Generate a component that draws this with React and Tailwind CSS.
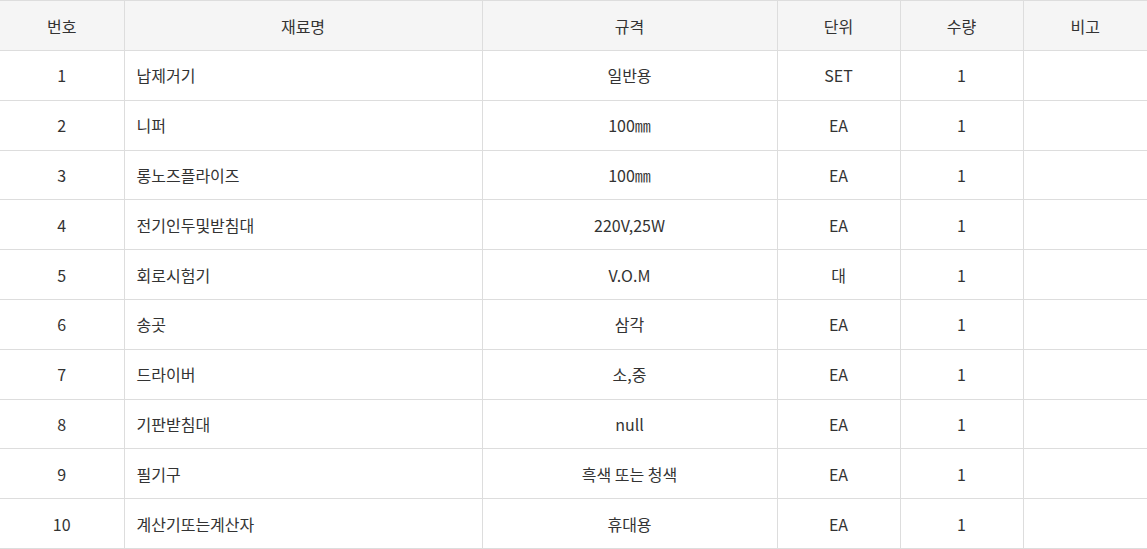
import React from 'react';

const rows = [
  ['1', '납제거기', '일반용', 'SET', '1'],
  ['2', '니퍼', '100㎜', 'EA', '1'],
  ['3', '롱노즈플라이즈', '100㎜', 'EA', '1'],
  ['4', '전기인두및받침대', '220V,25W', 'EA', '1'],
  ['5', '회로시험기', 'V.O.M', '대', '1'],
  ['6', '송곳', '삼각', 'EA', '1'],
  ['7', '드라이버', '소,중', 'EA', '1'],
  ['8', '기판받침대', 'null', 'EA', '1'],
  ['9', '필기구', '흑색 또는 청색', 'EA', '1'],
  ['10', '계산기또는계산자', '휴대용', 'EA', '1'],
];

const headers = ['번호', '재료명', '규격', '단위', '수량', '비고'];

export default function App() {
  return (
    <div className="w-[1147px] bg-white" style={{ fontFamily: '"Noto Sans CJK KR", "Noto Sans", sans-serif' }}>
      <table className="w-full border-collapse table-fixed text-[16px] text-[#333]">
        <colgroup>
          <col className="w-[124px]" />
          <col className="w-[358px]" />
          <col className="w-[295px]" />
          <col className="w-[123px]" />
          <col className="w-[123px]" />
          <col className="w-[124px]" />
        </colgroup>
        <thead>
          <tr className="h-[50px] bg-[#f5f5f5] border-t border-[#dddddd]">
            {headers.map((h, i) => (
              <th
                key={h}
                className={`font-normal text-center border-b border-[#dddddd] ${i > 0 ? 'border-l' : ''}`}
              >
                {h}
              </th>
            ))}
          </tr>
        </thead>
        <tbody>
          {rows.map((r) => (
            <tr key={r[0]} className="h-[49.8px]">
              <td className="text-center border-b border-[#dddddd]">{r[0]}</td>
              <td className="text-left pl-[12px] border-b border-l border-[#dddddd]">{r[1]}</td>
              <td className="text-center border-b border-l border-[#dddddd]">{r[2]}</td>
              <td className="text-center border-b border-l border-[#dddddd]">{r[3]}</td>
              <td className="text-center border-b border-l border-[#dddddd]">{r[4]}</td>
              <td className="border-b border-l border-[#dddddd]"></td>
            </tr>
          ))}
        </tbody>
      </table>
    </div>
  );
}
